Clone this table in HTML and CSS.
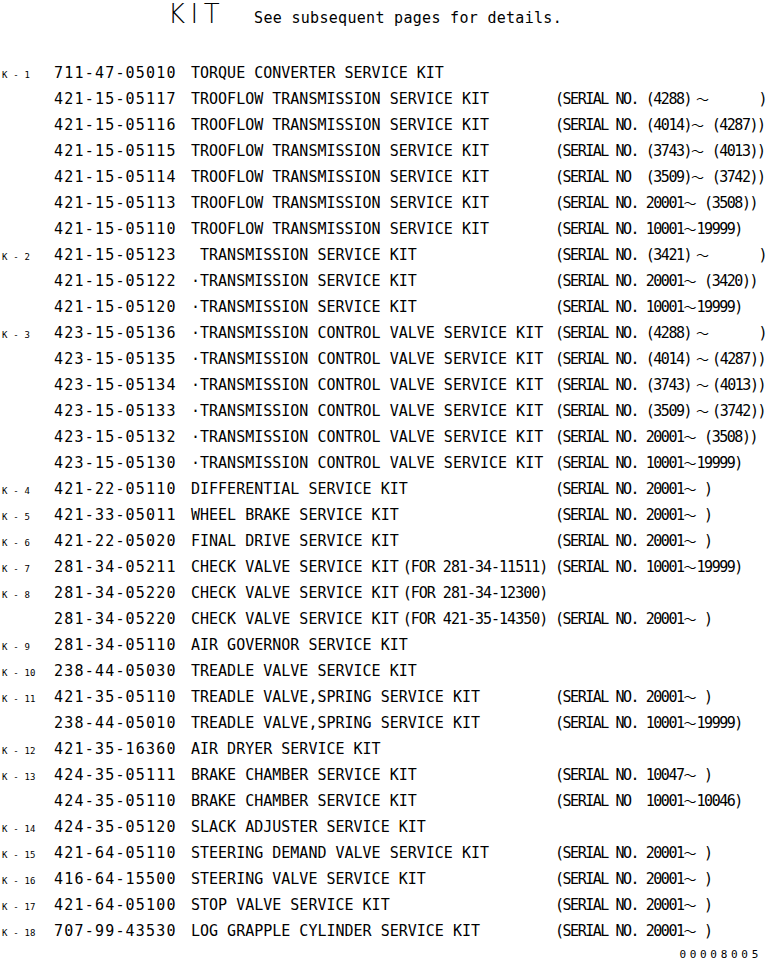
FILE: index.html
```html
<!DOCTYPE html>
<html lang="en">
<head>
<meta charset="utf-8">
<title>KIT</title>
<link rel="stylesheet" href="styles.css">
</head>
<body>
<div class="page">
  <header class="title"><span class="big">KIT</span><span class="note">See subsequent pages for details.</span></header>
  <div class="list">
    <div class="row"><span class="ref">K - 1</span><span class="pn">711-47-05010</span><span class="desc">TORQUE CONVERTER SERVICE KIT</span><span class="ser"></span></div>
    <div class="row"><span class="ref"></span><span class="pn">421-15-05117</span><span class="desc">TROOFLOW TRANSMISSION SERVICE KIT</span><span class="ser">(SERIAL NO. (4288)<span class="t wide">〜</span><span class="close">)</span></span></div>
    <div class="row"><span class="ref"></span><span class="pn">421-15-05116</span><span class="desc">TROOFLOW TRANSMISSION SERVICE KIT</span><span class="ser">(SERIAL NO. (4014)<span class="t">〜</span> (4287))</span></div>
    <div class="row"><span class="ref"></span><span class="pn">421-15-05115</span><span class="desc">TROOFLOW TRANSMISSION SERVICE KIT</span><span class="ser">(SERIAL NO. (3743)<span class="t">〜</span> (4013))</span></div>
    <div class="row"><span class="ref"></span><span class="pn">421-15-05114</span><span class="desc">TROOFLOW TRANSMISSION SERVICE KIT</span><span class="ser">(SERIAL NO  (3509)<span class="t">〜</span> (3742))</span></div>
    <div class="row"><span class="ref"></span><span class="pn">421-15-05113</span><span class="desc">TROOFLOW TRANSMISSION SERVICE KIT</span><span class="ser">(SERIAL NO. 20001<span class="t">〜</span> (3508))</span></div>
    <div class="row"><span class="ref"></span><span class="pn">421-15-05110</span><span class="desc">TROOFLOW TRANSMISSION SERVICE KIT</span><span class="ser">(SERIAL NO. 10001<span class="t">〜</span>19999)</span></div>
    <div class="row"><span class="ref">K - 2</span><span class="pn">421-15-05123</span><span class="desc"> TRANSMISSION SERVICE KIT</span><span class="ser">(SERIAL NO. (3421)<span class="t wide">〜</span><span class="close">)</span></span></div>
    <div class="row"><span class="ref"></span><span class="pn">421-15-05122</span><span class="desc">·TRANSMISSION SERVICE KIT</span><span class="ser">(SERIAL NO. 20001<span class="t">〜</span> (3420))</span></div>
    <div class="row"><span class="ref"></span><span class="pn">421-15-05120</span><span class="desc">·TRANSMISSION SERVICE KIT</span><span class="ser">(SERIAL NO. 10001<span class="t">〜</span>19999)</span></div>
    <div class="row"><span class="ref">K - 3</span><span class="pn">423-15-05136</span><span class="desc">·TRANSMISSION CONTROL VALVE SERVICE KIT</span><span class="ser">(SERIAL NO. (4288)<span class="t wide">〜</span><span class="close">)</span></span></div>
    <div class="row"><span class="ref"></span><span class="pn">423-15-05135</span><span class="desc">·TRANSMISSION CONTROL VALVE SERVICE KIT</span><span class="ser">(SERIAL NO. (4014)<span class="t wide">〜</span>(4287))</span></div>
    <div class="row"><span class="ref"></span><span class="pn">423-15-05134</span><span class="desc">·TRANSMISSION CONTROL VALVE SERVICE KIT</span><span class="ser">(SERIAL NO. (3743)<span class="t wide">〜</span>(4013))</span></div>
    <div class="row"><span class="ref"></span><span class="pn">423-15-05133</span><span class="desc">·TRANSMISSION CONTROL VALVE SERVICE KIT</span><span class="ser">(SERIAL NO. (3509)<span class="t wide">〜</span>(3742))</span></div>
    <div class="row"><span class="ref"></span><span class="pn">423-15-05132</span><span class="desc">·TRANSMISSION CONTROL VALVE SERVICE KIT</span><span class="ser">(SERIAL NO. 20001<span class="t">〜</span> (3508))</span></div>
    <div class="row"><span class="ref"></span><span class="pn">423-15-05130</span><span class="desc">·TRANSMISSION CONTROL VALVE SERVICE KIT</span><span class="ser">(SERIAL NO. 10001<span class="t">〜</span>19999)</span></div>
    <div class="row"><span class="ref">K - 4</span><span class="pn">421-22-05110</span><span class="desc">DIFFERENTIAL SERVICE KIT</span><span class="ser">(SERIAL NO. 20001<span class="t">〜</span> )</span></div>
    <div class="row"><span class="ref">K - 5</span><span class="pn">421-33-05011</span><span class="desc">WHEEL BRAKE SERVICE KIT</span><span class="ser">(SERIAL NO. 20001<span class="t">〜</span> )</span></div>
    <div class="row"><span class="ref">K - 6</span><span class="pn">421-22-05020</span><span class="desc">FINAL DRIVE SERVICE KIT</span><span class="ser">(SERIAL NO. 20001<span class="t">〜</span> )</span></div>
    <div class="row"><span class="ref">K - 7</span><span class="pn">281-34-05211</span><span class="desc">CHECK VALVE SERVICE KIT<span class="for">(FOR 281-34-11511)</span></span><span class="ser">(SERIAL NO. 10001<span class="t">〜</span>19999)</span></div>
    <div class="row"><span class="ref">K - 8</span><span class="pn">281-34-05220</span><span class="desc">CHECK VALVE SERVICE KIT<span class="for">(FOR 281-34-12300)</span></span><span class="ser"></span></div>
    <div class="row"><span class="ref"></span><span class="pn">281-34-05220</span><span class="desc">CHECK VALVE SERVICE KIT<span class="for">(FOR 421-35-14350)</span></span><span class="ser">(SERIAL NO. 20001<span class="t">〜</span> )</span></div>
    <div class="row"><span class="ref">K - 9</span><span class="pn">281-34-05110</span><span class="desc">AIR GOVERNOR SERVICE KIT</span><span class="ser"></span></div>
    <div class="row"><span class="ref">K - 10</span><span class="pn">238-44-05030</span><span class="desc">TREADLE VALVE SERVICE KIT</span><span class="ser"></span></div>
    <div class="row"><span class="ref">K - 11</span><span class="pn">421-35-05110</span><span class="desc">TREADLE VALVE,SPRING SERVICE KIT</span><span class="ser">(SERIAL NO. 20001<span class="t">〜</span> )</span></div>
    <div class="row"><span class="ref"></span><span class="pn">238-44-05010</span><span class="desc">TREADLE VALVE,SPRING SERVICE KIT</span><span class="ser">(SERIAL NO. 10001<span class="t">〜</span>19999)</span></div>
    <div class="row"><span class="ref">K - 12</span><span class="pn">421-35-16360</span><span class="desc">AIR DRYER SERVICE KIT</span><span class="ser"></span></div>
    <div class="row"><span class="ref">K - 13</span><span class="pn">424-35-05111</span><span class="desc">BRAKE CHAMBER SERVICE KIT</span><span class="ser">(SERIAL NO. 10047<span class="t">〜</span> )</span></div>
    <div class="row"><span class="ref"></span><span class="pn">424-35-05110</span><span class="desc">BRAKE CHAMBER SERVICE KIT</span><span class="ser">(SERIAL NO  10001<span class="t">〜</span>10046)</span></div>
    <div class="row"><span class="ref">K - 14</span><span class="pn">424-35-05120</span><span class="desc">SLACK ADJUSTER SERVICE KIT</span><span class="ser"></span></div>
    <div class="row"><span class="ref">K - 15</span><span class="pn">421-64-05110</span><span class="desc">STEERING DEMAND VALVE SERVICE KIT</span><span class="ser">(SERIAL NO. 20001<span class="t">〜</span> )</span></div>
    <div class="row"><span class="ref">K - 16</span><span class="pn">416-64-15500</span><span class="desc">STEERING VALVE SERVICE KIT</span><span class="ser">(SERIAL NO. 20001<span class="t">〜</span> )</span></div>
    <div class="row"><span class="ref">K - 17</span><span class="pn">421-64-05100</span><span class="desc">STOP VALVE SERVICE KIT</span><span class="ser">(SERIAL NO. 20001<span class="t">〜</span> )</span></div>
    <div class="row"><span class="ref">K - 18</span><span class="pn">707-99-43530</span><span class="desc">LOG GRAPPLE CYLINDER SERVICE KIT</span><span class="ser">(SERIAL NO. 20001<span class="t">〜</span> )</span></div>
  </div>
  <footer class="pageno">00008005</footer>
</div>
</body>
</html>
```
FILE: styles.css
```css
html, body {
  margin: 0;
  padding: 0;
  background: #ffffff;
}

body {
  color: #000000;
  font-family: "DejaVu Sans Mono", "Liberation Mono", monospace;
}

.page {
  width: 767px;
  height: 960px;
  overflow: hidden;
}

.title {
  display: flex;
  align-items: baseline;
  height: 26px;
  margin-bottom: 33px;
  padding-left: 168px;
  padding-top: 1px;
}

.big {
  font-family: "DejaVu Sans", "Liberation Sans", sans-serif;
  font-size: 26px;
  line-height: 26px;
  letter-spacing: 5.5px;
  font-weight: 200;
  font-stretch: condensed;
}

.note {
  margin-left: 29px;
  font-size: 15px;
  line-height: 26px;
  letter-spacing: 0.3px;
}

.row {
  display: grid;
  grid-template-columns: 54px 137px 364px 1fr;
  align-items: baseline;
  height: 26px;
  line-height: 26px;
  font-size: 15px;
  white-space: pre;
}

.ref {
  padding-left: 2px;
  font-size: 9px;
  letter-spacing: 0.2px;
}

.pn {
  letter-spacing: 1.2px;
}

.desc {
  letter-spacing: 0;
}

.for {
  margin-left: 4px;
  letter-spacing: -1px;
}

.ser {
  letter-spacing: -1.47px;
  padding-right: 1px;
}

.t {
  display: inline-block;
  width: 13px;
  font-family: "Noto Sans CJK JP", sans-serif;
  font-size: 13px;
  letter-spacing: 0;
  text-align: center;
}

.t.wide {
  width: 19px;
  padding-left: 2px;
}

.close {
  float: right;
}

.pageno {
  margin-top: 4px;
  padding-right: 5px;
  text-align: right;
  font-size: 11px;
  line-height: 14px;
  letter-spacing: 3.7px;
}
```
